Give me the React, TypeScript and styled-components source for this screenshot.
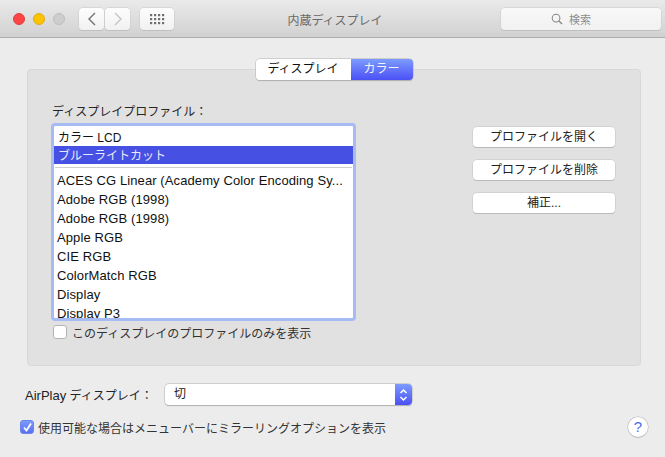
import React from "react";
import styled, { createGlobalStyle } from "styled-components";

const Global = createGlobalStyle`
  html, body { margin: 0; padding: 0; background: #ececec; }
  body { font-family: "Liberation Sans", "Noto Sans CJK JP", sans-serif; font-size: 12px; color: #1c1c1c; }
`;

const Win = styled.div`
  width: 665px; height: 457px; background: #ececec; display: flex; flex-direction: column; overflow: hidden;
`;
const TitleBar = styled.header`
  height: 37px; flex: none; display: flex; align-items: flex-start; border-bottom: 1px solid #aeadae;
  background: linear-gradient(#ebeaeb, #d2d1d2);
`;
const Lights = styled.div`
  display: flex; gap: 8px; margin: 13px 0 0 13px;
`;
const Light = styled.span<{ $c: string; $b: string }>`
  width: 12px; height: 12px; box-sizing: border-box; border-radius: 50%;
  background: ${p => p.$c}; border: 1px solid ${p => p.$b};
`;
const NavGroup = styled.div`
  display: flex; margin: 8px 0 0 14px; gap: 1px;
`;
const ToolBtn = styled.div<{ $w: number }>`
  width: ${p => p.$w}px; height: 22px; box-sizing: border-box; display: flex; align-items: center; justify-content: center;
  background: linear-gradient(#fdfdfd, #f1f1f1); border-radius: 4px;
  box-shadow: 0 0 0 0.5px #c9c8c9, 0 1px 0 #b9b8b9;
`;
const GridBtn = styled(ToolBtn)`
  margin: 8px 0 0 10px;
`;
const Title = styled.div`
  width: 322px; text-align: center; margin: 12px 0 0 0; font-size: 12px; line-height: 18px; color: #6a696a;
`;
const SearchBox = styled.div`
  width: 160px; height: 22px; margin: 8px 0 0 5px; padding-right: 20px; box-sizing: border-box; display: flex; align-items: center; justify-content: center; gap: 6px;
  background: linear-gradient(#f8f8f8, #f1f1f1); border-radius: 4px; color: #8c8c8c; font-size: 11px;
  box-shadow: 0 0 0 0.5px #c9c8c9, 0 1px 0 #b9b8b9;
`;
const Body = styled.main`
  flex: 1; display: flex; flex-direction: column; padding: 31px 24px 0 27px;
`;
const Panel = styled.section`
  height: 297px; box-sizing: border-box; background: #e1e1e1; border-radius: 4px; border: 1px solid #d8d8d8;
  display: flex; flex-direction: column; padding: 0 23px;
`;
const Seg = styled.div`
  align-self: center; margin: -11px 0 0 0; width: 157px; height: 21px; box-sizing: border-box; display: flex; border-radius: 4px; overflow: hidden;
  box-shadow: 0 0 0 0.5px #b9b8b9, 0 0.5px 1px #a8a8a8;
`;
const SegItem = styled.div<{ $on?: boolean; $w: number }>`
  width: ${p => p.$w}px; text-align: center; line-height: 20px; font-size: 12px;
  background: ${p => (p.$on ? "linear-gradient(#7c9cfd, #4b50f5)" : "#fff")};
  color: ${p => (p.$on ? "#f4f4ff" : "#111")};
`;
const Columns = styled.div`
  display: flex; margin-top: 23px;
`;
const Left = styled.div`
  width: 305px; display: flex; flex-direction: column;
`;
const Label = styled.div`
  line-height: 17px; padding: 1px 0 0 1px; margin-bottom: 2px; color: #262626;
`;
const List = styled.div`
  height: 198px; box-sizing: border-box; border: 3px solid #a6bbf3; border-radius: 4px; background: #fff; overflow: hidden;
  display: flex; flex-direction: column; padding-top: 1px;
`;
const Row = styled.div`
  flex: none; height: 19px; line-height: 20px; padding-left: 3px; white-space: nowrap;
  font-size: 13px; letter-spacing: 0.1px; color: #111;
`;
const JpRow = styled.div<{ $sel?: boolean }>`
  flex: none; height: ${p => (p.$sel ? 18 : 19)}px; box-sizing: border-box; padding: ${p => (p.$sel ? 2 : 3)}px 0 0 4px; line-height: 16px; white-space: nowrap;
  font-size: 12px;
  background: ${p => (p.$sel ? "#4650e3" : "transparent")};
  color: ${p => (p.$sel ? "#e8ebff" : "#111")};
`;
const Sep = styled.div`
  flex: none; height: 1px; margin: 3px 1px 3px 1px; background: #cfcfcf;
`;
const CheckRow = styled.label<{ $ml: number; $gap: number }>`
  display: flex; align-items: center; gap: ${p => p.$gap}px; height: 16px; margin-left: ${p => p.$ml}px; color: #333;
`;
const OnlyRow = styled(CheckRow)`
  margin-top: 3px;
`;
const MirrorRow = styled(CheckRow)`
  margin-top: 14px;
`;
const Box = styled.span<{ $on?: boolean }>`
  width: 14px; height: 14px; box-sizing: border-box; border-radius: 3px; display: flex; align-items: center; justify-content: center;
  background: ${p => (p.$on ? "linear-gradient(#7b9bfb, #5a6ff3)" : "#fff")};
  border: 1px solid ${p => (p.$on ? "#6c84ee" : "#b5b5b5")};
`;
const Right = styled.div`
  margin: 24px 0 0 117px; display: flex; flex-direction: column; gap: 13px;
`;
const Btn = styled.div`
  width: 142px; height: 20px; box-sizing: border-box; text-align: center; line-height: 20px; background: #fff; border-radius: 4px; color: #222;
  box-shadow: 0 0 0 0.5px #c4c4c4, 0 1px 0 #b0b0b0;
`;
const AirRow = styled.div`
  display: flex; align-items: center; margin: 18px 0 0 -2px; height: 21px;
`;
const AirLabel = styled.span`
  width: 140px; color: #222;
`;
const AirLatin = styled.span`
  font-size: 13px;
`;
const Select = styled.div`
  width: 247px; height: 21px; box-sizing: border-box; display: flex; background: #fff; border-radius: 4px; overflow: hidden;
  box-shadow: 0 0 0 0.5px #b9b8b9, 0 0.5px 1px #a8a8a8; line-height: 20px;
`;
const SelectText = styled.span`
  flex: 1; padding-left: 9px; color: #222;
`;
const Stepper = styled.span`
  width: 17px; display: flex; align-items: center; justify-content: center; background: linear-gradient(#7c9cfd, #4b50f5);
`;
const Bottom = styled.div`
  display: flex; align-items: flex-start; justify-content: space-between;
`;
const Help = styled.div`
  width: 20px; height: 20px; box-sizing: border-box; border-radius: 50%; background: #fff; margin: 12px -7px 0 0;
  box-shadow: 0 0 0 0.5px #b5b5b5, 0 0.5px 1px #a8a8a8; text-align: center; line-height: 20px; font-size: 15px; color: #4a6ff0;
`;

const Chevron = ({ left, c }: { left?: boolean; c: string }) => (
  <svg width="10" height="16" viewBox="0 0 10 16" fill="none" stroke={c} strokeWidth="1.4">
    <path d={left ? "M8 2 L2 8 L8 14" : "M2 2 L8 8 L2 14"} />
  </svg>
);
const Dots = () => (
  <svg width="15" height="11" viewBox="0 0 15 11" fill="#707070">
    {[0, 4, 8].flatMap(y =>
      [0, 4, 8, 12].map(x => <rect key={`${x}-${y}`} x={x} y={y} width="2.2" height="2.2" />)
    )}
  </svg>
);

const rows = ["ACES CG Linear (Academy Color Encoding Sy...", "Adobe RGB (1998)", "Adobe RGB (1998)", "Apple RGB", "CIE RGB", "ColorMatch RGB", "Display", "Display P3"];

export default function App() {
  return (
    <Win>
      <Global />
      <TitleBar>
        <Lights>
          <Light $c="#fc4544" $b="#e33e3c" />
          <Light $c="#fdc200" $b="#e2a91c" />
          <Light $c="#cecdce" $b="#bfbebf" />
        </Lights>
        <NavGroup>
          <ToolBtn $w={25}><Chevron left c="#707070" /></ToolBtn>
          <ToolBtn $w={25}><Chevron c="#c4c4c4" /></ToolBtn>
        </NavGroup>
        <GridBtn $w={34}><Dots /></GridBtn>
        <Title>内蔵ディスプレイ</Title>
        <SearchBox>
          <svg width="12" height="12" viewBox="0 0 13 13" fill="none" stroke="#858585" strokeWidth="1.1">
            <circle cx="5.5" cy="5.5" r="4.2" />
            <path d="M8.6 8.6 L12 12" strokeWidth="1.4" />
          </svg>
          <span>検索</span>
        </SearchBox>
      </TitleBar>
      <Body>
        <Panel>
          <Seg>
            <SegItem $w={95}>ディスプレイ</SegItem>
            <SegItem $w={62} $on>カラー</SegItem>
          </Seg>
          <Columns>
            <Left>
              <Label>ディスプレイプロファイル：</Label>
              <List>
                <JpRow>カラー LCD</JpRow>
                <JpRow $sel>ブルーライトカット</JpRow>
                <Sep />
                {rows.map((r, i) => <Row key={i}>{r}</Row>)}
              </List>
              <OnlyRow $ml={2} $gap={5}><Box />このディスプレイのプロファイルのみを表示</OnlyRow>
            </Left>
            <Right>
              <Btn>プロファイルを開く</Btn>
              <Btn>プロファイルを削除</Btn>
              <Btn>補正...</Btn>
            </Right>
          </Columns>
        </Panel>
        <AirRow>
          <AirLabel><AirLatin>AirPlay</AirLatin> ディスプレイ：</AirLabel>
          <Select>
            <SelectText>切</SelectText>
            <Stepper>
              <svg width="9" height="14" viewBox="0 0 9 14" fill="none" stroke="#fff" strokeWidth="1.5">
                <path d="M1.5 5 L4.5 2 L7.5 5 M1.5 9 L4.5 12 L7.5 9" />
              </svg>
            </Stepper>
          </Select>
        </AirRow>
        <Bottom>
          <MirrorRow $ml={-7} $gap={4}>
            <Box $on>
              <svg width="11" height="11" viewBox="0 0 11 11" fill="none" stroke="#fff" strokeWidth="1.8">
                <path d="M2 5.5 L4.5 8.5 L9 1.5" />
              </svg>
            </Box>
            使用可能な場合はメニューバーにミラーリングオプションを表示
          </MirrorRow>
          <Help>?</Help>
        </Bottom>
      </Body>
    </Win>
  );
}
